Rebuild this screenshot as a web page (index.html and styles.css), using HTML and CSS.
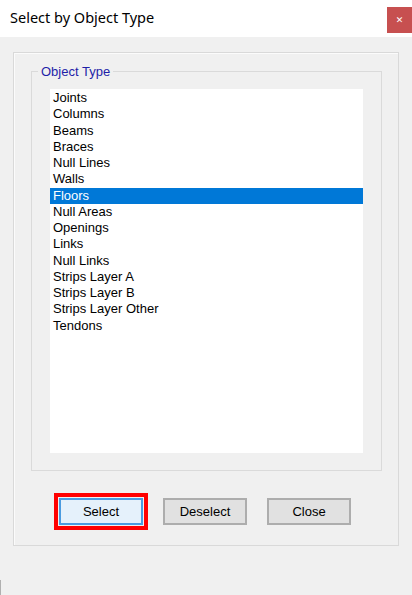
FILE: index.html
```html
<!DOCTYPE html>
<html>
<head>
<meta charset="utf-8">
<link rel="stylesheet" href="styles.css">
</head>
<body>
<div class="window">
  <div class="titlebar">
    <div class="title">Select by Object Type</div>
    <div class="close">&#x2715;</div>
  </div>
  <div class="client">
    <div class="panel">
      <fieldset class="group">
        <legend class="legend">Object Type</legend>
        <ul class="listbox">
          <li class="item">Joints</li>
          <li class="item">Columns</li>
          <li class="item">Beams</li>
          <li class="item">Braces</li>
          <li class="item">Null Lines</li>
          <li class="item">Walls</li>
          <li class="item selected">Floors</li>
          <li class="item">Null Areas</li>
          <li class="item">Openings</li>
          <li class="item">Links</li>
          <li class="item">Null Links</li>
          <li class="item">Strips Layer A</li>
          <li class="item">Strips Layer B</li>
          <li class="item">Strips Layer Other</li>
          <li class="item">Tendons</li>
        </ul>
      </fieldset>
      <div class="buttons">
        <button class="btn default">Select</button>
        <button class="btn">Deselect</button>
        <button class="btn">Close</button>
      </div>
    </div>
    <div class="corner-mark"></div>
  </div>
</div>
</body>
</html>
```

FILE: styles.css
```css
html, body {
  margin: 0;
  padding: 0;
}
body {
  width: 412px;
  height: 595px;
  overflow: hidden;
  background: #f0f0f0;
  font-family: "Liberation Sans", Arial, sans-serif;
}
.window {
  width: 412px;
  height: 595px;
  display: flex;
  flex-direction: column;
}
.titlebar {
  height: 37px;
  background: #ffffff;
  display: flex;
  justify-content: space-between;
  align-items: flex-start;
  flex: none;
}
.title {
  font-family: "Noto Sans", "Open Sans", sans-serif;
  font-size: 14.5px;
  color: #000;
  padding-left: 10px;
  padding-top: 7px;
  line-height: 20px;
}
.close {
  margin-top: 7px;
  width: 25px;
  height: 26px;
  background: #c75050;
  color: #fff;
  font-size: 9px;
  font-weight: bold;
  display: flex;
  align-items: center;
  justify-content: center;
  font-family: "DejaVu Sans", sans-serif;
}
.client {
  flex: 1;
  display: flex;
  flex-direction: column;
  position: relative;
}
.panel {
  margin: 15px 0 0 13px;
  width: 384px;
  height: 492px;
  border: 1px solid #d9d9d9;
  box-shadow: inset 1px 1px 0 #fbfbfb;
  display: flex;
  flex-direction: column;
}
.group {
  margin: 10px 0 0 17px;
  padding: 0;
  border: 1px solid #dadada;
  box-sizing: border-box;
  width: 351px;
  height: 408px;
  min-width: 0;
}
.legend {
  margin-left: 6px;
  padding: 0 3px;
  font-size: 13px;
  line-height: 17px;
  color: #1f1fa8;
}
.listbox {
  list-style: none;
  margin: 9px 0 0 18px;
  padding: 1px 0 0 0;
  width: 313px;
  height: 364px;
  box-sizing: border-box;
  background: #ffffff;
}
.item {
  font-size: 13px;
  line-height: 16.25px;
  height: 16.25px;
  padding-left: 3px;
  color: #000;
  white-space: nowrap;
}
.item.selected {
  background: #0078d7;
  color: #ffffff;
}
.buttons {
  display: flex;
  margin: 27px 0 0 45px;
  gap: 20px;
}
.btn {
  width: 84px;
  height: 27px;
  box-sizing: border-box;
  background: #e1e1e1;
  border: 2px solid #adadad;
  font-family: "Liberation Sans", Arial, sans-serif;
  font-size: 13px;
  color: #000;
  padding: 0;
  margin: 0;
}
.btn.default {
  background: #e5f1fb;
  border-color: #4a9be0;
  outline: 4px solid #ff0000;
  outline-offset: 1px;
}
.corner-mark {
  position: absolute;
  left: 0;
  bottom: 0;
  width: 1px;
  height: 15px;
  background: #b0b0b0;
}
```
